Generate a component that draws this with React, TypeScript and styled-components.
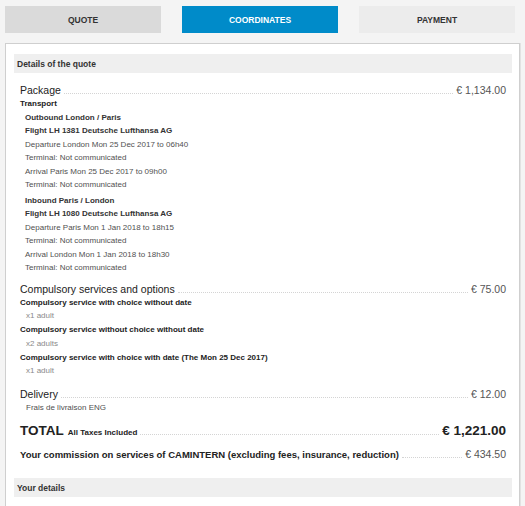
import React from 'react';
import styled, { createGlobalStyle } from 'styled-components';

const GlobalStyle = createGlobalStyle`
  html, body {
    margin: 0;
    padding: 0;
    background: #f4f4f4;
    font-family: "Liberation Sans", Arial, sans-serif;
    color: #333;
  }
`;

const Page = styled.div`
  padding: 6px 5px 0 5px;
  width: 515px;
`;

const Tabs = styled.div`
  display: grid;
  grid-template-columns: 156px 156px 156px;
  column-gap: 21px;
  margin-bottom: 10px;
`;

const Tab = styled.div<{ active?: boolean; done?: boolean }>`
  height: 27px;
  display: flex;
  align-items: center;
  justify-content: center;
  font-size: 8.5px;
  font-weight: bold;
  text-transform: uppercase;
  background: ${p => (p.active ? '#008bc9' : p.done ? '#dadada' : '#ececec')};
  color: ${p => (p.active ? '#ffffff' : '#333')};
`;

const Panel = styled.div`
  background: #fff;
  border: 1px solid #cfcfcf;
  box-shadow: 1px 0 0 #e2e2e2;
  padding: 10px 7px 30px 8px;
  width: 498px;
`;

const SectionHeader = styled.div`
  background: #efefef;
  height: 19px;
  display: flex;
  align-items: center;
  padding-left: 3px;
  font-size: 8.5px;
  font-weight: bold;
  color: #333;
`;

const Body = styled.div`
  padding: 10px 6px 0 6px;
`;

const LeaderRow = styled.div<{ size: number; lh: number; top?: number }>`
  display: flex;
  align-items: baseline;
  margin-top: ${p => p.top ?? 0}px;
  font-size: ${p => p.size}px;
  line-height: ${p => p.lh}px;
`;

const Label = styled.span<{ bold?: boolean }>`
  color: #222;
  font-weight: ${p => (p.bold ? 'bold' : 'normal')};
  white-space: nowrap;
`;

const Note = styled.span`
  font-size: 8px;
  font-weight: bold;
  margin-left: 4px;
`;

const Leader = styled.span`
  flex: 1;
  border-bottom: 1px dotted #d4d4d4;
  margin: 0 3px;
`;

const Price = styled.span<{ bold?: boolean; size?: number }>`
  white-space: nowrap;
  color: ${p => (p.bold ? '#222' : '#555')};
  font-weight: ${p => (p.bold ? 'bold' : 'normal')};
  font-size: ${p => (p.size ? `${p.size}px` : 'inherit')};
`;

const Line = styled.div<{ kind: 'title' | 'strong' | 'text' | 'muted'; indent: number; lh?: number; top?: number }>`
  padding-left: ${p => p.indent}px;
  margin-top: ${p => p.top ?? 0}px;
  font-size: 8px;
  line-height: ${p => p.lh ?? 13.5}px;
  font-weight: ${p => (p.kind === 'title' || p.kind === 'strong' ? 'bold' : 'normal')};
  color: ${p =>
    p.kind === 'title' ? '#222' : p.kind === 'strong' ? '#333' : p.kind === 'text' ? '#505050' : '#8a8a8a'};
`;

const Spacer = styled.div<{ h: number }>`
  height: ${p => p.h}px;
`;

const legs = [
  {
    title: 'Outbound London / Paris',
    flight: 'Flight LH 1381 Deutsche Lufthansa AG',
    lines: [
      'Departure London Mon 25 Dec 2017 to 06h40',
      'Terminal: Not communicated',
      'Arrival Paris Mon 25 Dec 2017 to 09h00',
      'Terminal: Not communicated',
    ],
  },
  {
    title: 'Inbound Paris / London',
    flight: 'Flight LH 1080 Deutsche Lufthansa AG',
    lines: [
      'Departure Paris Mon 1 Jan 2018 to 18h15',
      'Terminal: Not communicated',
      'Arrival London Mon 1 Jan 2018 to 18h30',
      'Terminal: Not communicated',
    ],
  },
];

const services = [
  { name: 'Compulsory service with choice without date', qty: 'x1 adult' },
  { name: 'Compulsory service without choice without date', qty: 'x2 adults' },
  { name: 'Compulsory service with choice with date (The Mon 25 Dec 2017)', qty: 'x1 adult' },
];

export default function App() {
  return (
    <>
      <GlobalStyle />
      <Page>
        <Tabs>
          <Tab done>Quote</Tab>
          <Tab active>Coordinates</Tab>
          <Tab>Payment</Tab>
        </Tabs>
        <Panel>
          <SectionHeader>Details of the quote</SectionHeader>
          <Body>
            <LeaderRow size={10.5} lh={14}>
              <Label>Package</Label>
              <Leader />
              <Price>€ 1,134.00</Price>
            </LeaderRow>
            <Line kind="title" indent={0}>Transport</Line>
            {legs.map((leg, i) => (
              <div key={leg.title}>
                <Line kind="strong" indent={5} top={i > 0 ? 2 : 0}>{leg.title}</Line>
                <Line kind="strong" indent={5}>{leg.flight}</Line>
                {leg.lines.map((l, j) => (
                  <Line kind="text" indent={5} key={j}>{l}</Line>
                ))}
              </div>
            ))}
            <LeaderRow size={10.5} lh={14} top={7}>
              <Label>Compulsory services and options</Label>
              <Leader />
              <Price>€ 75.00</Price>
            </LeaderRow>
            {services.map(s => (
              <div key={s.name}>
                <Line kind="title" indent={0} lh={13.8}>{s.name}</Line>
                <Line kind="muted" indent={6} lh={13.8}>{s.qty}</Line>
              </div>
            ))}
            <LeaderRow size={10.5} lh={14} top={9}>
              <Label>Delivery</Label>
              <Leader />
              <Price>€ 12.00</Price>
            </LeaderRow>
            <Line kind="text" indent={6} lh={14}>Frais de livraison ENG</Line>
            <LeaderRow size={13.5} lh={18} top={7}>
              <Label bold>TOTAL<Note>All Taxes Included</Note></Label>
              <Leader />
              <Price bold>€ 1,221.00</Price>
            </LeaderRow>
            <LeaderRow size={9.5} lh={14} top={5}>
              <Label bold>Your commission on services of CAMINTERN (excluding fees, insurance, reduction)</Label>
              <Leader />
              <Price size={10.5}>€ 434.50</Price>
            </LeaderRow>
          </Body>
          <Spacer h={16} />
          <SectionHeader>Your details</SectionHeader>
        </Panel>
      </Page>
    </>
  );
}
